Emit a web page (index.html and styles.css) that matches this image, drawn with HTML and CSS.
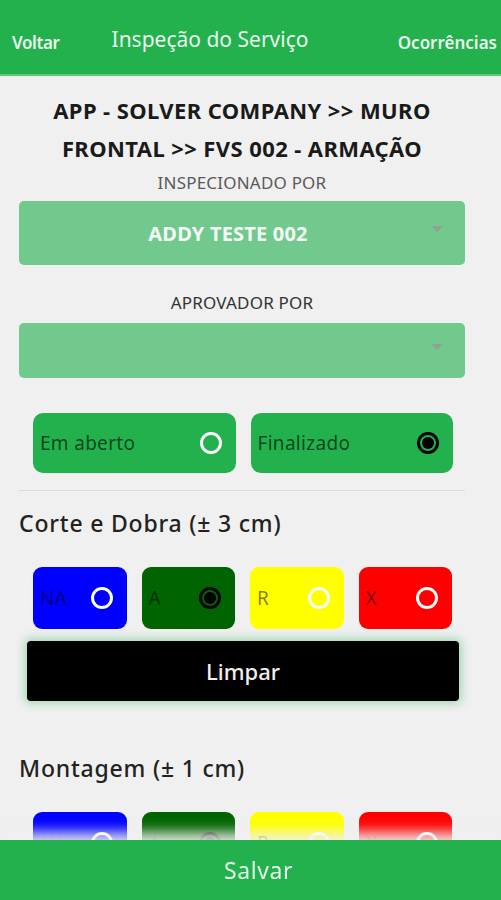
FILE: index.html
```html
<!DOCTYPE html>
<html lang="pt-BR">
<head>
<meta charset="utf-8">
<title>Inspeção do Serviço</title>
<link rel="stylesheet" href="styles.css">
</head>
<body>
<header class="topbar">
  <span class="nav-left">Voltar</span>
  <span class="nav-title">Inspeção do Serviço</span>
  <span class="nav-right">Ocorrências</span>
</header>

<main class="content">
  <h1 class="path">APP - SOLVER COMPANY &gt;&gt; MURO<br>FRONTAL &gt;&gt; FVS 002 - ARMAÇÃO</h1>

  <div class="label first">INSPECIONADO POR</div>
  <div class="select tall"><span class="select-value">ADDY TESTE 002</span><span class="caret"></span></div>

  <div class="label second">APROVADOR POR</div>
  <div class="select short"><span class="select-value"></span><span class="caret"></span></div>

  <div class="status-row">
    <div class="status"><span class="status-text">Em aberto</span><span class="radio"></span></div>
    <div class="status"><span class="status-text">Finalizado</span><span class="radio checked"></span></div>
  </div>

  <hr class="divider">

  <h2 class="section">Corte e Dobra (± 3 cm)</h2>
  <div class="options">
    <div class="opt blue"><span class="opt-text">NA</span><span class="radio"></span></div>
    <div class="opt green"><span class="opt-text">A</span><span class="radio checked"></span></div>
    <div class="opt yellow"><span class="opt-text">R</span><span class="radio"></span></div>
    <div class="opt red"><span class="opt-text">X</span><span class="radio"></span></div>
  </div>
  <div class="clear-btn">Limpar</div>

  <h2 class="section second-section">Montagem (± 1 cm)</h2>
  <div class="options">
    <div class="opt blue"><span class="opt-text">NA</span><span class="radio"></span></div>
    <div class="opt green"><span class="opt-text">A</span><span class="radio checked"></span></div>
    <div class="opt yellow"><span class="opt-text">R</span><span class="radio"></span></div>
    <div class="opt red"><span class="opt-text">X</span><span class="radio"></span></div>
  </div>
</main>

<footer class="savebar">Salvar</footer>
</body>
</html>
```

FILE: styles.css
```css
* { box-sizing: border-box; }

html, body {
  margin: 0;
  padding: 0;
  height: 900px;
  overflow: hidden;
}

body {
  background: #f0f0f0;
  font-family: "Noto Sans", "Open Sans", sans-serif;
  color: #1e1e1e;
}

.topbar {
  height: 76px;
  background: #22b14c;
  border-bottom: 2px solid #5cc97b;
  display: flex;
  align-items: center;
  color: #eaf7ee;
  padding: 4px 4px 0 12px;
}

.nav-left {
  font-size: 17px;
  font-weight: 600;
  letter-spacing: -0.4px;
  margin-top: 6px;
}

.nav-title {
  font-size: 21px;
  font-weight: 400;
  letter-spacing: 0;
  margin-left: 52px;
}

.nav-right {
  font-size: 17px;
  font-weight: 600;
  letter-spacing: 0;
  margin-left: auto;
  margin-top: 6px;
}

.content {
  padding: 0 36px 0 19px;
}

.path {
  margin: 15px 0 0;
  font-size: 22px;
  font-weight: 700;
  line-height: 38px;
  text-align: center;
  color: #1a1a1a;
  letter-spacing: 0.4px;
}

.label {
  text-align: center;
  font-size: 17px;
  line-height: 20px;
  color: #5a5a5a;
  letter-spacing: 0.2px;
}
.label.first { margin-top: 6px; }
.label.second { margin-top: 28px; color: #333; }

.select {
  position: relative;
  background: #72c98d;
  border-radius: 5px;
  display: flex;
  align-items: center;
  justify-content: center;
  margin-top: 8px;
}
.select.tall { height: 64px; }
.select.short { height: 55px; margin-top: 10px; }

.select-value {
  color: #f4fbf6;
  font-weight: 700;
  font-size: 20px;
  letter-spacing: 0.2px;
  margin-left: -28px;
}

.caret {
  position: absolute;
  right: 22px;
  top: 50%;
  margin-top: -7px;
  width: 0;
  height: 0;
  border-left: 6px solid transparent;
  border-right: 6px solid transparent;
  border-top: 6px solid #8fa196;
}

.status-row {
  display: flex;
  gap: 15px;
  margin: 35px 12px 0 14px;
}

.status {
  flex: 1;
  height: 60px;
  background: #22b14c;
  border-radius: 10px;
  display: flex;
  align-items: center;
  justify-content: space-between;
  padding: 0 14px 0 7px;
}

.status-text {
  font-size: 19px;
  color: rgba(0, 0, 0, 0.62);
  letter-spacing: 0.3px;
}

.radio {
  width: 22px;
  height: 22px;
  border-radius: 50%;
  border: 3px solid #ffffff;
  flex: none;
  position: relative;
}
.radio.checked {
  border-color: #000;
}
.radio.checked::after {
  content: "";
  position: absolute;
  left: 2px;
  top: 2px;
  width: 12px;
  height: 12px;
  border-radius: 50%;
  background: #000;
}

.divider {
  border: 0;
  border-top: 1px solid #dcdcdc;
  margin: 17px 0 0;
}

.section {
  margin: 20px 0 0;
  font-size: 23px;
  font-weight: 500;
  line-height: 24px;
  color: #222;
  letter-spacing: 0.8px;
}
.section.second-section { margin-top: 55px; }

.options {
  display: flex;
  gap: 15px;
  margin: 32px 13px 0 14px;
}

.opt {
  flex: 1;
  height: 62px;
  border-radius: 9px;
  display: flex;
  align-items: center;
  justify-content: space-between;
  padding: 0 14px 0 7px;
}
.opt.blue { background: #0000ff; }
.opt.green { background: #006400; }
.opt.yellow { background: #ffff00; }
.opt.red { background: #ff0000; }

.opt-text {
  font-size: 19px;
  color: rgba(0, 0, 0, 0.5);
  letter-spacing: 0.3px;
}

.options + .clear-btn { margin-top: 12px; }

.clear-btn {
  margin: 0 6px 0 8px;
  height: 60px;
  background: #000;
  border-radius: 4px;
  color: #eeeeee;
  font-size: 22px;
  font-weight: 500;
  display: flex;
  align-items: center;
  justify-content: center;
  box-shadow: 0 0 8px 3px rgba(34, 177, 76, 0.35);
}

.savebar {
  position: fixed;
  left: 0;
  right: 0;
  bottom: 0;
  height: 60px;
  background: #22b14c;
  color: #e6f6ea;
  font-size: 23px;
  letter-spacing: 0.6px;
  display: flex;
  align-items: center;
  justify-content: center;
  padding-left: 16px;
  box-shadow: 0 -8px 12px rgba(240, 240, 240, 0.9);
}
```
